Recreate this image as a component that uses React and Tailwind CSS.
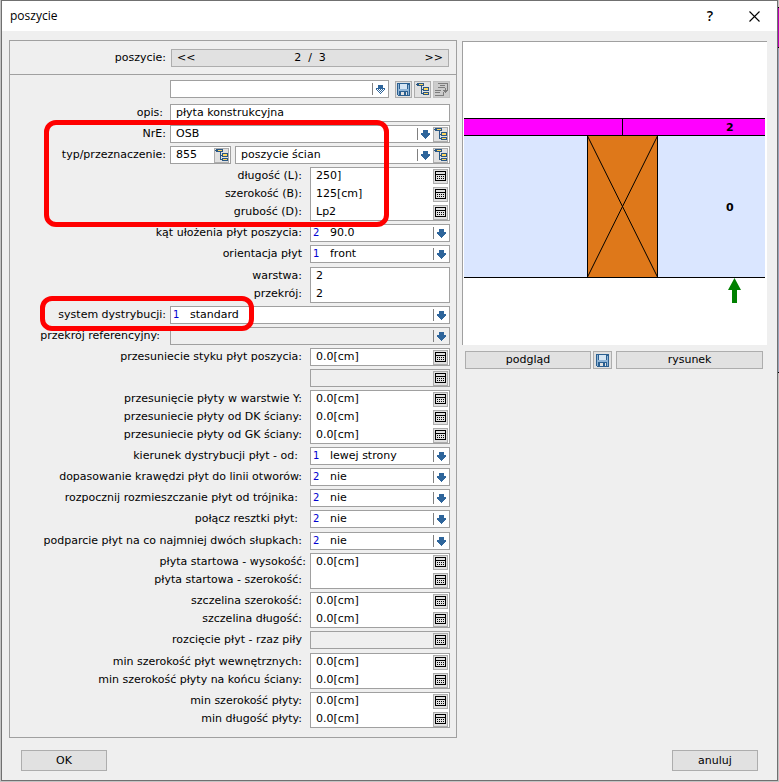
import { useState } from 'react';

const BUTTON = 'border border-[#adadad] bg-[#e1e1e1] hover:bg-[#e5f1fb] text-center cursor-pointer';
const BOX = 'border border-[#a0a0a0]';

// rows of one section share a 3px gap, sections are 4px apart
const SECTIONS = [
  [
    { type: 'inputs', wide: true, rows: [{ label: 'opis:', value: 'płyta konstrukcyjna', pad: 'pr-[7px]', plain: true }] },
    { type: 'combo', label: 'NrE:', value: 'OSB' },
    { type: 'purpose', label: 'typ/przeznaczenie:', code: '855', value: 'poszycie ścian' },
    {
      type: 'inputs',
      rows: [
        { label: 'długość (L):', value: '250]' },
        { label: 'szerokość (B):', value: '125[cm]' },
        { label: 'grubość (D):', value: 'Lp2' },
      ],
    },
    { type: 'select', label: 'kąt ułożenia płyt poszycia:', index: 2, value: '90.0' },
    { type: 'select', label: 'orientacja płyt', index: 1, value: 'front' },
  ],
  [
    {
      type: 'inputs',
      rows: [
        { label: 'warstwa:', value: '2', plain: true },
        { label: 'przekrój:', value: '2', plain: true },
      ],
    },
    { type: 'select', wide: true, label: 'system dystrybucji:', index: 1, value: 'standard', pad: 'pr-1' },
    { type: 'select', wide: true, label: 'przekrój referencyjny:', value: '', pad: 'pr-[10px]', disabled: true },
    { type: 'inputs', rows: [{ label: 'przesuniecie styku płyt poszycia:', value: '0.0[cm]' }] },
    { type: 'inputs', disabled: true, rows: [{ label: '', value: '' }] },
    {
      type: 'inputs',
      rows: [
        { label: 'przesunięcie płyty w warstwie Y:', value: '0.0[cm]' },
        { label: 'przesuniecie płyty od DK ściany:', value: '0.0[cm]' },
        { label: 'przesuniecie płyty od GK ściany:', value: '0.0[cm]' },
      ],
    },
    { type: 'select', label: 'kierunek dystrybucji płyt - od:', index: 1, value: 'lewej strony', pad: 'pr-3' },
    { type: 'select', label: 'dopasowanie krawędzi płyt do linii otworów:', index: 2, value: 'nie' },
    { type: 'select', label: 'rozpocznij rozmieszczanie płyt od trójnika:', index: 2, value: 'nie', pad: 'pr-3' },
    { type: 'select', label: 'połącz resztki płyt:', index: 2, value: 'nie', pad: 'pr-3' },
  ],
  [
    { type: 'select', label: 'podparcie płyt na co najmniej dwóch słupkach:', index: 2, value: 'nie' },
    {
      type: 'inputs',
      rows: [
        { label: 'płyta startowa - wysokość:', value: '0.0[cm]', pad: 'pr-1' },
        { label: 'płyta startowa - szerokość:', value: '' },
      ],
    },
    {
      type: 'inputs',
      rows: [
        { label: 'szczelina szerokość:', value: '0.0[cm]' },
        { label: 'szczelina długość:', value: '0.0[cm]' },
      ],
    },
    { type: 'inputs', disabled: true, rows: [{ label: 'rozcięcie płyt - rzaz piły', value: '' }] },
  ],
  [
    {
      type: 'inputs',
      rows: [
        { label: 'min szerokość płyt wewnętrznych:', value: '0.0[cm]' },
        { label: 'min szerokość płyty na końcu ściany:', value: '0.0[cm]' },
      ],
    },
    {
      type: 'inputs',
      rows: [
        { label: 'min szerokość płyty:', value: '0.0[cm]' },
        { label: 'min długość płyty:', value: '0.0[cm]' },
      ],
    },
  ],
];

function CalcIcon() {
  return (
    <svg width="11" height="10" viewBox="0 0 11 10" shapeRendering="crispEdges">
      <path fill="none" stroke="#000" d="M0.5 0.5h10v9h-10z M0 3.5h11" />
      <path stroke="#000" strokeDasharray="1 1" d="M2 5.5h7 M2 7.5h7" />
    </svg>
  );
}

function TreeIcon() {
  return (
    <svg width="13" height="13" viewBox="0 0 13 13" shapeRendering="crispEdges">
      <path fill="none" stroke="#2a5783" d="M0 1.5h2 M5.5 3v8 M5 6.5h3 M5 10.5h3" />
      <path fill="#2a5783" d="M1 0h7v3h-7z M7 4h6v4h-6z M7 9h6v3h-6z" />
      <path fill="#ffd75e" d="M3 1h4v1h-4z M8 5h4v2h-4z M8 10h4v1h-4z" />
    </svg>
  );
}

function SaveIcon() {
  return (
    <svg width="13" height="13" viewBox="0 0 13 13" shapeRendering="crispEdges">
      <path fill="#2b6091" d="M0 0h13v13h-12l-1-1z" />
      <path fill="#8fb4d6" d="M1 1h1v11h-1z M11 2h1v10h-1z M2 6h9v2h-9z" />
      <path fill="#d6e6f4" d="M3 1h7v5h-7z" />
      <path fill="#e1e1e1" d="M4 9h6v3h-6z" />
      <path fill="#2b6091" d="M7 9h2v3h-2z" />
    </svg>
  );
}

function InsertIcon() {
  return (
    <svg width="13" height="13" viewBox="0 0 13 13" shapeRendering="crispEdges">
      <path
        fill="none"
        stroke="#7d7d7d"
        d="M3 0.5h9.5v7 M5 2.5h5 M3 4.5h7 M10 4.5v4 M0 7.5h6 M0 9.5h5 M0 12.5h9 M8.5 9v4"
      />
      <path fill="#7d7d7d" d="M7 7h6l-3 3z" />
    </svg>
  );
}

function ArrowIcon({ dotted = false }) {
  return (
    <svg width="9" height="9" viewBox="0 0 9 9" shapeRendering="crispEdges">
      <path fill="#2e659b" d="M2 0h5v3h2v2h-1v1h-1v1h-1v1h-1v1h-1v-1h-1v-1h-1v-1h-1v-1h-1v-2h2z" />
      {dotted && <path stroke="#fff" strokeDasharray="1 1" d="M1 4.5h8 M2 5.5h6 M1 6.5h7 M4 7.5h3" />}
    </svg>
  );
}

function IconButton({ title, children, disabled = false }) {
  return (
    <button
      type="button"
      title={title}
      aria-label={title}
      disabled={disabled}
      className="w-[15px] h-[15px] mr-px shrink-0 flex items-center justify-center border border-[#adadad] bg-[#e1e1e1]"
    >
      {children}
    </button>
  );
}

function DropArrow({ dotted = false }) {
  return (
    <span className="w-4 h-3 shrink-0 flex items-center justify-center border-l border-[#808080]">
      <ArrowIcon dotted={dotted} />
    </span>
  );
}

function Label({ htmlFor, pad = 'pr-2', children }) {
  return (
    <label htmlFor={htmlFor} className={`h-[18px] leading-[18px] block text-right whitespace-nowrap ${pad}`}>
      {children}
    </label>
  );
}

function InputsRow({ id, rows, wide, disabled }) {
  const [values, setValues] = useState(rows.map((row) => row.value));

  const handleChange = (i, value) => {
    setValues(values.map((v, k) => (k === i ? value : v)));
  };

  return (
    <div className="flex">
      <div className="flex-1">
        {rows.map((row, i) => (
          <Label key={i} htmlFor={`${id}-${i}`} pad={row.pad}>{row.label}</Label>
        ))}
      </div>
      <div className={`${BOX} ${wide ? 'w-[280px]' : 'w-[140px]'} ${disabled ? 'bg-[#efefef]' : 'bg-white'} flex flex-col`}>
        {rows.map((row, i) => (
          <div key={i} className="h-[18px] first:-mt-px last:-mb-px flex items-center">
            <input
              id={`${id}-${i}`}
              aria-label={row.label || 'przesuniecie'}
              value={values[i]}
              disabled={disabled}
              onChange={(e) => handleChange(i, e.target.value)}
              className="flex-1 min-w-0 h-4 pl-[5px] bg-transparent outline-none"
            />
            {!row.plain && <IconButton title="kalkulator"><CalcIcon /></IconButton>}
          </div>
        ))}
      </div>
    </div>
  );
}

function SelectRow({ id, label, index, value, pad, wide, disabled }) {
  return (
    <div className="flex">
      <div className="flex-1"><Label htmlFor={id} pad={pad}>{label}</Label></div>
      <div className={`${BOX} ${wide ? 'w-[280px]' : 'w-[140px]'} ${disabled ? 'bg-[#efefef]' : 'bg-white'} h-[18px] flex items-center`}>
        <span className="w-[19px] pl-0.5 shrink-0 text-[10px] text-[#0000d0]">{index}</span>
        <select id={id} disabled={disabled} className="flex-1 min-w-0 h-4 appearance-none bg-transparent outline-none">
          <option>{value}</option>
        </select>
        <DropArrow />
      </div>
    </div>
  );
}

function Combo({ id, value, label }) {
  return (
    <div className={`${BOX} bg-white h-[18px] flex-1 flex items-center`}>
      <select id={id} aria-label={label} className="flex-1 min-w-0 h-4 pl-[5px] appearance-none bg-transparent outline-none">
        <option>{value}</option>
      </select>
      <DropArrow />
      <IconButton title="wybierz"><TreeIcon /></IconButton>
    </div>
  );
}

function Field({ field, id }) {
  if (field.type === 'inputs') return <InputsRow id={id} {...field} />;
  if (field.type === 'select') return <SelectRow id={id} {...field} />;
  return (
    <div className="flex">
      <div className="flex-1"><Label htmlFor={id} pad="pr-1">{field.label}</Label></div>
      <div className="w-[280px] flex gap-1">
        {field.type === 'combo' ? (
          <Combo id={id} value={field.value} />
        ) : (
          <>
            <div className={`${BOX} bg-white w-[61px] h-[18px] flex items-center`}>
              <input id={id} defaultValue={field.code} className="flex-1 min-w-0 h-4 pl-[5px] bg-transparent outline-none" />
              <IconButton title="wybierz typ"><TreeIcon /></IconButton>
            </div>
            <Combo id={`${id}-name`} value={field.value} label="przeznaczenie" />
          </>
        )}
      </div>
    </div>
  );
}

function Preview() {
  return (
    <div className="mt-px border-t border-l border-[#a0a0a0] bg-white pt-px pl-px pr-0.5 pb-px">
      <svg viewBox="0 0 301 301" className="w-full block">
        <g shapeRendering="crispEdges">
          <rect x="0" y="75" width="301" height="18" fill="#ff00ff" />
          <rect x="0" y="93" width="301" height="141" fill="#dae6ff" />
          <rect x="123" y="93" width="71" height="141" fill="#de781a" />
          <path
            fill="none"
            stroke="#000"
            d="M0 75.5h301 M0 92.5h301 M0 234.5h301 M158.5 75v18 M123.5 93v141 M193.5 93v141"
          />
        </g>
        <path stroke="#000" d="M123.5 93L193.5 234 M193.5 93L123.5 234" />
        <path fill="#008000" d="M270.5 235l6.5 12h-4v13h-5v-13h-4z" />
        <g className="text-[11px] font-bold" fill="#000">
          <text x="262" y="88">2</text>
          <text x="262" y="168">0</text>
        </g>
      </svg>
    </div>
  );
}

export default function App() {
  const [page, setPage] = useState(2);

  return (
    <div className="flex bg-[#c3c3c3] pl-px pb-px font-['DejaVu_Sans',Verdana,sans-serif] text-[11px] leading-4 text-black">
      <div className="flex-1 border border-[#707070] bg-[#efefef]">
        <header className="h-[30px] bg-white flex items-center justify-between pl-2 pr-[17px]">
          <h1 className="text-xs font-['Open_Sans','Noto_Sans',sans-serif]">poszycie</h1>
          <div className="flex items-center gap-9">
            <button type="button" aria-label="pomoc" className="text-sm font-semibold font-['Open_Sans','Noto_Sans',sans-serif]">?</button>
            <button type="button" aria-label="zamknij">
              <svg width="11" height="11" viewBox="0 0 11 11">
                <path stroke="#000" strokeWidth="1.1" d="M0.5 0.5l10 10 M10.5 0.5l-10 10" />
              </svg>
            </button>
          </div>
        </header>

        <main className="grid grid-cols-[448fr_305fr] gap-[5px] pt-[9px] pl-[7px] pr-[10px] items-start">
          <section className="relative border border-[#a0a0a0] pb-[9px]">
            <div className="h-[34px] border-b border-[#a0a0a0] flex items-center pr-[7px]">
              <span className="flex-1 text-right pr-[5px]">poszycie:</span>
              <div className={`${BUTTON} w-[278px] h-[18px] px-[5px] flex items-center justify-between`}>
                <button type="button" onClick={() => setPage(Math.max(1, page - 1))}>&lt;&lt;</button>
                <span className="whitespace-pre">{page}  /  3</span>
                <button type="button" onClick={() => setPage(Math.min(3, page + 1))}>&gt;&gt;</button>
              </div>
            </div>

            <div className="pt-[5px] pr-[6px] flex flex-col gap-1">
              <div className="flex justify-end items-center mb-0.5">
                <div className="w-[280px] flex items-center gap-0.5">
                  <div className={`${BOX} bg-white h-[18px] flex-1 mr-1 flex items-center`}>
                    <select aria-label="zestaw" className="flex-1 min-w-0 h-4 appearance-none bg-transparent outline-none">
                      <option></option>
                    </select>
                    <DropArrow dotted />
                  </div>
                  <button type="button" aria-label="zapisz" className={`${BUTTON} w-[17px] h-[17px] flex items-center justify-center`}><SaveIcon /></button>
                  <button type="button" aria-label="drzewo" className={`${BUTTON} w-[17px] h-[17px] flex items-center justify-center`}><TreeIcon /></button>
                  <button type="button" aria-label="wstaw" disabled className="w-[17px] h-[17px] flex items-center justify-center border border-[#bfbfbf] bg-[#cccccc]"><InsertIcon /></button>
                </div>
              </div>

              {SECTIONS.map((fields, s) => (
                <div key={s} className="flex flex-col gap-[3px]">
                  {fields.map((field, i) => (
                    <Field key={i} id={`field-${s}-${i}`} field={field} />
                  ))}
                </div>
              ))}
            </div>

            {/* highlight frames over the form */}
            <div className="absolute pointer-events-none top-[79px] right-[67px] w-[345px] h-[107px] border-[5px] border-[#ff0000] rounded-xl" />
            <div className="absolute pointer-events-none top-[255px] right-[202px] w-[214px] h-[35px] border-[5px] border-[#ff0000] rounded-xl" />
          </section>

          <section className="flex flex-col gap-1.5">
            <Preview />
            <div className="flex pl-[3px] pr-1">
              <button type="button" className={`${BUTTON} flex-[126] h-[18px] mr-0.5`}>podgląd</button>
              <button type="button" aria-label="zapisz rysunek" className={`${BUTTON} w-[19px] h-[18px] mr-1 flex items-center justify-center`}><SaveIcon /></button>
              <button type="button" className={`${BUTTON} flex-[147] h-[18px]`}>rysunek</button>
            </div>
          </section>
        </main>

        <footer className="flex justify-between pt-3 pb-[9px] pl-[19px] pr-[19px]">
          <button type="button" className={`${BUTTON} w-[86px] h-[21px]`}>OK</button>
          <button type="button" className={`${BUTTON} w-[86px] h-[21px]`}>anuluj</button>
        </footer>
      </div>

      {/* edge of the drawing behind the dialog */}
      <div className="w-px pt-[7px]">
        <div className="h-[41px] bg-[#b400b4] border-y border-black" />
        <div className="h-[325px] bg-[#9aa3b8] border-b border-black" />
      </div>
    </div>
  );
}
